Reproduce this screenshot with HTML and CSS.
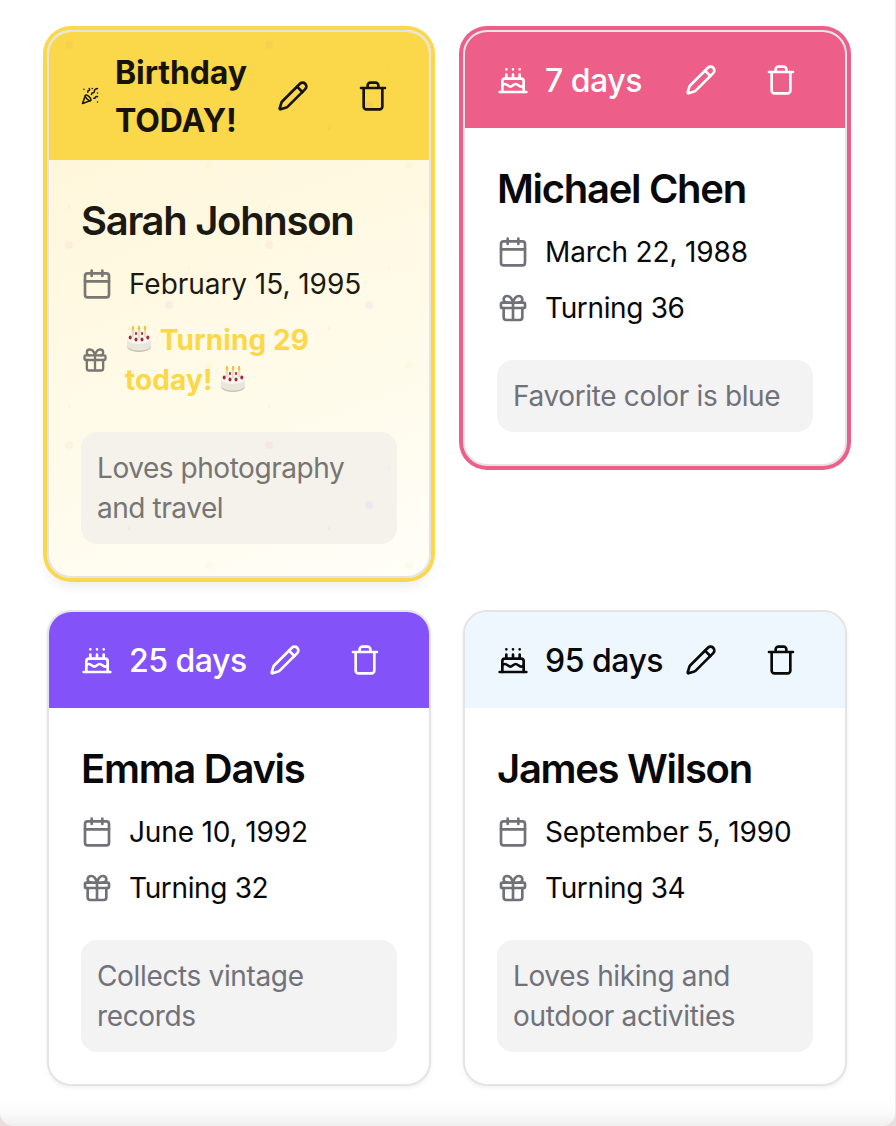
FILE: index.html
```
<!DOCTYPE html>
<html lang="en">
<head>
    <meta charset="UTF-8">
    <meta name="viewport" content="width=device-width, initial-scale=1.0">
    <title>Birthdays</title>
    <link rel="stylesheet" href="styles.css">
</head>
<body>
    <!-- shared icons -->
    <svg class="sprite" width="0" height="0">
        <symbol id="cake" viewBox="0 0 24 24">
            <path d="M20 21v-8a2 2 0 0 0-2-2H6a2 2 0 0 0-2 2v8"/>
            <path d="M4 16s.5-1 2-1 2.5 2 4 2 2.5-2 4-2 2.500 2 4 2 2-1 2-1"/>
            <path d="M2 21h20M7 8v3M12 8v3M17 8v3M7 4h.01M12 4h.01M17 4h.01"/>
        </symbol>
        <symbol id="pencil" viewBox="0 0 24 24">
            <path d="M21.174 6.812a1 1 0 0 0-3.986-3.987L3.842 16.174a2 2 0 0 0-.5.830l-1.321 4.352a.5.5 0 0 0 .623.622l4.353-1.320a2 2 0 0 0 .830-.497z"/>
            <path d="m15 5 4 4"/>
        </symbol>
        <symbol id="trash" viewBox="0 0 24 24">
            <path d="M3 6h18M19 6v14c0 1-1 2-2 2H7c-1 0-2-1-2-2V6M8 6V4c0-1 1-2 2-2h4c1 0 2 1 2 2v2"/>
        </symbol>
        <symbol id="calendar" viewBox="0 0 24 24">
            <path d="M8 2v4M16 2v4M3 10h18"/>
            <rect x="3" y="4" width="18" height="18" rx="2"/>
        </symbol>
        <symbol id="gift" viewBox="0 0 24 24">
            <rect x="3" y="8" width="18" height="4" rx="1"/>
            <path d="M12 8v13M19 12v7a2 2 0 0 1-2 2H7a2 2 0 0 1-2-2v-7"/>
            <path d="M7.500 8a2.500 2.500 0 0 1 0-5A4.800 8 0 0 1 12 8a4.800 8 0 0 1 4.500-5 2.500 2.500 0 0 1 0 5"/>
        </symbol>
        <symbol id="party" viewBox="0 0 24 24">
            <path d="M5.800 11.300 2 22l10.700-3.790M4 3h.01M22 8h.01M15 2h.01M22 20h.01"/>
            <path d="m22 2-2.240.750a2.900 2.900 0 0 0-1.960 3.120c.1.860-.570 1.630-1.450 1.630h-.380c-.860 0-1.600.6-1.760 1.440L14 10"/>
            <path d="m22 13-.820-.330c-.860-.340-1.820.2-1.980 1.110c-.110.7-.720 1.220-1.430 1.220H17"/>
            <path d="m11 2 .330.820c.340.860-.2 1.820-1.110 1.980C9.520 4.900 9 5.520 9 6.230V7"/>
            <path d="M11 13c1.930 1.930 2.830 4.170 2 5-.830.830-3.070-.070-5-2-1.930-1.930-2.830-4.170-2-5 .830-.830 3.070.070 5 2Z"/>
        </symbol>
        <symbol id="emoji-cake" viewBox="0 0 28 28">
            <path d="M2 14v7.500c0 3 5 5.500 12 5.500s12-2.500 12-5.500V14z" fill="#c9c5b8"/>
            <path d="M2 14v6.500c0 2.800 5 5 12 5s12-2.200 12-5V14z" fill="#e9e6dc"/>
            <ellipse cx="14" cy="14" rx="12" ry="4.800" fill="#f8f6ee"/>
            <path d="M8 5v7M14 5v8M20 5v7" stroke="#e3dcc6" stroke-width="2.600"/>
            <g fill="#ecc544">
                <ellipse cx="8" cy="3.200" rx="1.300" ry="2.400"/>
                <ellipse cx="14" cy="3.200" rx="1.300" ry="2.400"/>
                <ellipse cx="20" cy="3.200" rx="1.300" ry="2.400"/>
            </g>
            <g fill="#a9263a">
                <ellipse cx="5.200" cy="12.500" rx="1.500" ry="1.900"/>
                <ellipse cx="11" cy="14.500" rx="1.500" ry="1.900"/>
                <ellipse cx="17" cy="14.500" rx="1.500" ry="1.900"/>
                <ellipse cx="22.800" cy="12.500" rx="1.500" ry="1.900"/>
                <ellipse cx="11" cy="8.500" rx="1" ry="1.800"/>
                <ellipse cx="17" cy="8.500" rx="1" ry="1.800"/>
            </g>
        </symbol>
    </svg>

    <main class="page">
        <div class="grid">
            <article class="card card-today">
                <header class="card-header">
                    <svg class="icon icon-party"><use href="#party"/></svg>
                    <span class="countdown">Birthday TODAY!</span>
                    <div class="actions">
                        <button class="btn" aria-label="Edit"><svg class="icon"><use href="#pencil"/></svg></button>
                        <button class="btn" aria-label="Delete"><svg class="icon"><use href="#trash"/></svg></button>
                    </div>
                </header>
                <div class="card-body">
                    <h3 class="name">Sarah Johnson</h3>
                    <div class="row"><svg class="icon"><use href="#calendar"/></svg><span>February 15, 1995</span></div>
                    <div class="row row-today">
                        <svg class="icon"><use href="#gift"/></svg>
                        <span class="turning"><svg class="emoji"><use href="#emoji-cake"/></svg> Turning 29<br>today! <svg class="emoji"><use href="#emoji-cake"/></svg></span>
                    </div>
                    <p class="note">Loves photography and travel</p>
                </div>
                <svg class="confetti" width="100%" height="100%">
                    <pattern id="confetti" width="200" height="200" patternUnits="userSpaceOnUse">
                        <circle cx="20" cy="13" r="4" fill="#f0605d"/>
                        <circle cx="120" cy="73" r="4" fill="#8352f9"/>
                        <circle cx="160" cy="133" r="4" fill="#fad84a"/>
                        <path d="M60 13l2 4h-4z" fill="#fad84a"/>
                        <path d="M80 94l2 4h-4z" fill="#ef3d68"/>
                        <path d="M139 38l2-4" stroke="#4aa8fa"/>
                        <path d="M19 177l2-4" stroke="#8352f9"/>
                    </pattern>
                    <rect width="100%" height="100%" fill="url(#confetti)"/>
                </svg>
            </article>

            <article class="card card-week">
                <header class="card-header">
                    <svg class="icon"><use href="#cake"/></svg>
                    <span class="countdown">7 days</span>
                    <div class="actions">
                        <button class="btn" aria-label="Edit"><svg class="icon"><use href="#pencil"/></svg></button>
                        <button class="btn" aria-label="Delete"><svg class="icon"><use href="#trash"/></svg></button>
                    </div>
                </header>
                <div class="card-body">
                    <h3 class="name">Michael Chen</h3>
                    <div class="row"><svg class="icon"><use href="#calendar"/></svg><span>March 22, 1988</span></div>
                    <div class="row"><svg class="icon"><use href="#gift"/></svg><span class="age">Turning 36</span></div>
                    <p class="note">Favorite color is blue</p>
                </div>
            </article>

            <article class="card card-month">
                <header class="card-header">
                    <svg class="icon"><use href="#cake"/></svg>
                    <span class="countdown">25 days</span>
                    <div class="actions">
                        <button class="btn" aria-label="Edit"><svg class="icon"><use href="#pencil"/></svg></button>
                        <button class="btn" aria-label="Delete"><svg class="icon"><use href="#trash"/></svg></button>
                    </div>
                </header>
                <div class="card-body">
                    <h3 class="name">Emma Davis</h3>
                    <div class="row"><svg class="icon"><use href="#calendar"/></svg><span>June 10, 1992</span></div>
                    <div class="row"><svg class="icon"><use href="#gift"/></svg><span class="age">Turning 32</span></div>
                    <p class="note">Collects vintage records</p>
                </div>
            </article>

            <article class="card card-later">
                <header class="card-header">
                    <svg class="icon"><use href="#cake"/></svg>
                    <span class="countdown">95 days</span>
                    <div class="actions">
                        <button class="btn" aria-label="Edit"><svg class="icon"><use href="#pencil"/></svg></button>
                        <button class="btn" aria-label="Delete"><svg class="icon"><use href="#trash"/></svg></button>
                    </div>
                </header>
                <div class="card-body">
                    <h3 class="name">James Wilson</h3>
                    <div class="row"><svg class="icon"><use href="#calendar"/></svg><span>September 5, 1990</span></div>
                    <div class="row"><svg class="icon"><use href="#gift"/></svg><span class="age">Turning 34</span></div>
                    <p class="note">Loves hiking and outdoor activities</p>
                </div>
            </article>
        </div>
    </main>
</body>
</html>
```
FILE: styles.css
```
* {
    box-sizing: border-box;
}
body {
    margin: 0;
    font-family: Inter, "Liberation Sans", sans-serif;
    font-size: 28px;
    line-height: 40px;
    color: #09090b;
    background-color: #e9dfe1;
}
.sprite {
    position: absolute;
}
.page {
    height: 1126px;
    padding: 30px 48px 0 47px;
    border-right: 1px solid #ececec;
    border-radius: 0 0 14px 14px;
    background: linear-gradient(#fff 1098px, #fbfbfb 1112px, #f0f0f0 1126px);
    overflow: hidden;
}
.grid {
    display: grid;
    grid-template-columns: 384px 384px;
    gap: 32px;
    align-items: start;
}
.card {
    position: relative;
    border: 2px solid #e4e4e7;
    border-radius: 24px;
    background-color: #fff;
    box-shadow: 0 2px 4px rgba(0, 0, 0, 0.06);
}
.card-header {
    display: flex;
    align-items: center;
    justify-content: space-between;
    padding: 24px 32px;
    border-radius: 22px 22px 0 0;
    font-size: 32px;
    font-weight: 500;
    line-height: 48px;
}
.icon {
    flex: none;
    width: 32px;
    height: 32px;
    fill: none;
    stroke: currentColor;
    stroke-width: 2;
    stroke-linecap: round;
    stroke-linejoin: round;
}
.countdown {
    margin: 1px auto -1px 16px;
    letter-spacing: -0.5px;
    white-space: nowrap;
}
.actions {
    display: flex;
    gap: 16px;
    margin: 0 0 0 -16px;
}
.btn {
    display: flex;
    align-items: center;
    justify-content: center;
    width: 64px;
    height: 48px;
    padding: 0;
    border: 0;
    background: none;
    color: inherit;
}
.card-body {
    padding: 32px;
}
.name {
    margin: 1px 0 -1px;
    font-size: 40px;
    font-weight: 600;
    line-height: 56px;
    letter-spacing: -1.3px;
}
.row {
    display: flex;
    align-items: center;
    gap: 16px;
    margin-top: 16px;
    letter-spacing: -0.15px;
}
.row .icon {
    color: #71717a;
}
.age {
    letter-spacing: -0.35px;
}
.note {
    margin: 32px 0 0;
    padding: 16px;
    border-radius: 16px;
    letter-spacing: -0.35px;
    color: #71717a;
    background-color: #f3f3f4;
}

/* header colours by time left */
.card-week {
    box-shadow: 0 0 0 4px #ed5e89;
}
.card-week .card-header {
    color: #fff;
    background-color: #ed5e89;
}
.card-month .card-header {
    color: #fff;
    background-color: #8352f8;
}
.card-later .card-header {
    background-color: #eff7fe;
}

/* birthday today */
.card-today {
    color: #1c1a10;
    background: linear-gradient(160deg, #fff4d2, #fff8df 30%, #fffbea 65%, #fffef8);
    box-shadow: 0 0 0 4px #fad84a, 0 8px 12px rgba(0, 0, 0, 0.08);
}
.card-today .card-header {
    padding: 16px 24px 16px 32px;
    font-weight: 700;
    color: #171407;
    background-color: #fad84a;
}
.card-today .countdown {
    width: 136px;
    letter-spacing: -0.1px;
    white-space: normal;
}
.icon-party {
    width: 18px;
}
.card-today .row {
    letter-spacing: -0.05px;
}
.card-today .row .icon {
    color: #7a7672;
}
.row-today .icon {
    width: 28px;
}
.turning {
    font-weight: 700;
    letter-spacing: 0.1px;
    color: #fad84a;
}
.emoji {
    width: 28px;
    height: 28px;
    vertical-align: -3px;
}
.card-today .note {
    letter-spacing: -0.45px;
    color: #777572;
    background-color: #f5f2ec;
}
.confetti {
    position: absolute;
    inset: 0;
    opacity: 0.06;
    pointer-events: none;
}
```
